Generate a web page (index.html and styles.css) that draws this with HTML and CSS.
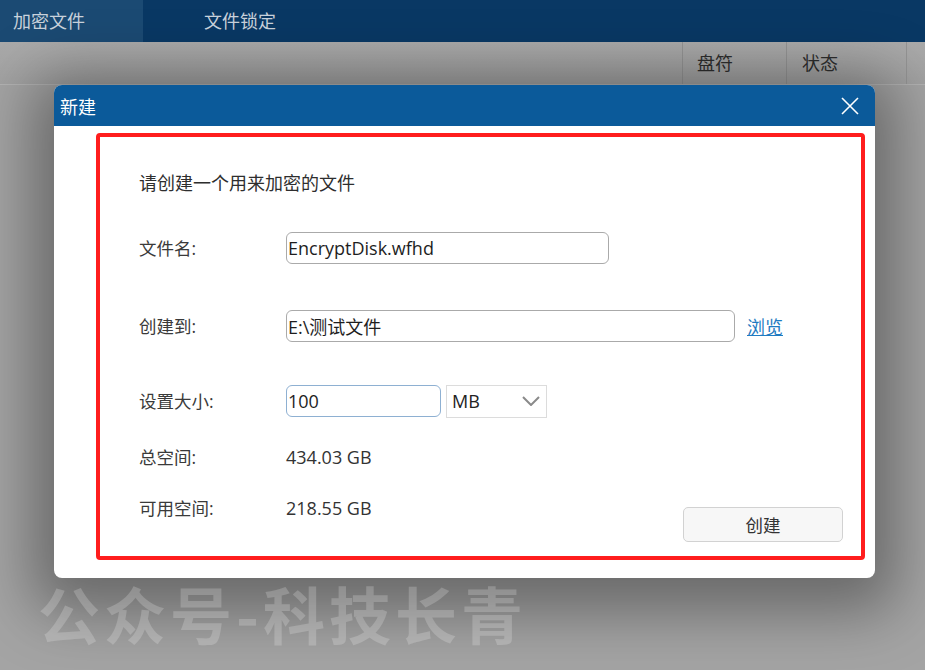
FILE: index.html
```html
<!DOCTYPE html>
<html lang="zh-CN">

<head>
    <meta charset="UTF-8">
    <meta name="viewport" content="width=device-width, initial-scale=1.0">
    <title>加密文件</title>
    <link rel="stylesheet" href="styles.css">
</head>

<body>
    <div class="topbar">
        <div class="tab active">加密文件</div>
        <div class="tab">文件锁定</div>
    </div>

    <div class="table-head">
        <div class="col col-main"></div>
        <div class="col col-drive">盘符</div>
        <div class="col col-state">状态</div>
        <div class="col col-rest"></div>
    </div>

    <div class="dialog">
        <div class="dialog-title">
            <span>新建</span>
            <svg class="close" width="18" height="18" viewBox="0 0 18 18">
                <path d="M1 1 L17 17 M17 1 L1 17" stroke="#fff" stroke-width="1.6" fill="none" />
            </svg>
        </div>
        <div class="dialog-body">
            <div class="frame">
                <div class="intro">请创建一个用来加密的文件</div>

                <div class="row row-name">
                    <label class="label">文件名:</label>
                    <input class="field field-name" type="text" value="EncryptDisk.wfhd">
                </div>

                <div class="row row-path">
                    <label class="label">创建到:</label>
                    <input class="field field-path" type="text" value="E:\测试文件">
                    <a class="browse" href="#">浏览</a>
                </div>

                <div class="row row-size">
                    <label class="label">设置大小:</label>
                    <input class="field field-size" type="text" value="100">
                    <div class="unit">
                        <span>MB</span>
                        <svg width="18" height="10" viewBox="0 0 18 10">
                            <path d="M1 1 L9 9 L17 1" stroke="#8a8a8a" stroke-width="2" fill="none" />
                        </svg>
                    </div>
                </div>

                <div class="row row-total">
                    <span class="label">总空间:</span>
                    <span class="value">434.03 GB</span>
                </div>

                <div class="row row-free">
                    <span class="label">可用空间:</span>
                    <span class="value">218.55 GB</span>
                    <button class="create-btn">创建</button>
                </div>
            </div>
        </div>
    </div>

    <div class="watermark">公众号-科技长青</div>
</body>

</html>
```

FILE: styles.css
```css
body {
    margin: 0;
    width: 925px;
    height: 670px;
    overflow: hidden;
    background: #a4a4a4;
    font-family: "Open Sans", "Noto Sans CJK SC", sans-serif;
    color: #333;
}

.topbar {
    height: 42px;
    display: flex;
    background: #093864;
}

.tab {
    font-size: 18px;
    line-height: 42px;
    color: #c9d2dc;
}

.tab.active {
    width: 130px;
    padding-left: 13px;
    background: #1b4a73;
}

.tab + .tab {
    padding-left: 61px;
}

.table-head {
    height: 42px;
    display: flex;
    border-bottom: 1px solid #b3b3b3;
    background: linear-gradient(to bottom, #aaaaaa, #a2a2a2);
}

.col {
    font-size: 18px;
    line-height: 42px;
    color: #2e2e2e;
    box-sizing: border-box;
}

.col-main {
    width: 682px;
}

.col-drive {
    width: 104px;
    padding-left: 14px;
    border-left: 1px solid #949494;
}

.col-state {
    width: 120px;
    padding-left: 15px;
    border-left: 1px solid #949494;
}

.col-rest {
    flex: 1;
    border-left: 1px solid #949494;
}

.dialog {
    position: relative;
    z-index: 1;
    width: 821px;
    height: 493px;
    margin: 0 0 0 54px;
    background: #fff;
    border-radius: 8px;
    overflow: hidden;
    box-shadow: 0 12px 60px 22px rgba(0, 0, 0, 0.36);
}

.dialog-title {
    height: 41px;
    display: flex;
    align-items: center;
    justify-content: space-between;
    padding: 0 16px 0 6px;
    background: #0b5a9a;
    color: #fff;
    font-size: 18px;
}

.dialog-body {
    padding: 7px 10px 18px 42px;
}

.frame {
    height: 427px;
    box-sizing: border-box;
    border: 4px solid #ff1d1d;
    border-radius: 4px;
    padding: 29px 18px 0 39px;
    display: flex;
    flex-direction: column;
}

.intro {
    font-size: 18px;
    line-height: 34px;
    color: #2e2e2e;
}

.row {
    display: flex;
    align-items: center;
    height: 34px;
}

.row-name {
    margin-top: 31px;
}

.row-path {
    margin-top: 44px;
}

.row-size {
    margin-top: 41px;
}

.row-total {
    margin-top: 22px;
}

.row-free {
    margin-top: 17px;
    align-items: flex-start;
    height: 51px;
}

.label {
    width: 147px;
    flex-shrink: 0;
    font-size: 17.5px;
    line-height: 34px;
    color: #3a3a3a;
}

.value {
    font-size: 18px;
    line-height: 34px;
    color: #333;
}

.field {
    height: 32px;
    box-sizing: border-box;
    padding: 0 1px;
    border: 1px solid #aaaaaa;
    border-radius: 6px;
    font-family: inherit;
    font-size: 18px;
    color: #1e1e1e;
    outline: none;
    background: #fff;
}

.field-name {
    width: 323px;
}

.field-path {
    width: 449px;
}

.field-size {
    width: 155px;
    border-color: #8eb0d2;
}

.browse {
    margin-left: 12px;
    font-size: 18px;
    color: #1f7bc2;
    text-decoration: underline;
}

.unit {
    width: 101px;
    height: 33px;
    margin-left: 5px;
    box-sizing: border-box;
    border: 1px solid #dcdcdc;
    display: flex;
    align-items: center;
    justify-content: space-between;
    padding: 0 6px 0 5px;
    font-size: 18px;
    color: #222;
}

.create-btn {
    margin-left: auto;
    margin-top: 16px;
    width: 160px;
    height: 35px;
    border: 1px solid #d2d2d2;
    border-radius: 5px;
    background: #f7f7f7;
    font-family: inherit;
    font-size: 17.5px;
    color: #333;
}

.watermark {
    position: relative;
    z-index: 2;
    margin: 0 0 0 38px;
    font-family: "Noto Sans CJK SC", sans-serif;
    font-size: 62px;
    font-weight: bold;
    line-height: 70px;
    letter-spacing: 4px;
    color: rgba(255, 255, 255, 0.2);
}
```
